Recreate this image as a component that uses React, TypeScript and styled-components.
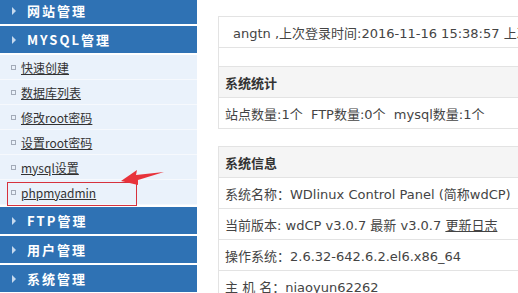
import React from "react";
import styled, { createGlobalStyle } from "styled-components";

const Global = createGlobalStyle`
  html, body { margin: 0; padding: 0; background: #fff; overflow: hidden; }
  body { font-family: "Noto Sans CJK SC", "Microsoft YaHei", sans-serif; }
`;

const Page = styled.div`
  display: flex;
  width: 518px;
  height: 293px;
  overflow: hidden;
`;

const Sidebar = styled.div`
  width: 197px;
  flex: none;
  display: flex;
  flex-direction: column;
  gap: 2px;
  margin-top: -3px;
`;

const Header = styled.div`
  height: 27px;
  background: #2f72b4;
  display: flex;
  align-items: center;
  padding-left: 12px;
  gap: 11px;
  color: #fff;
  font-size: 13px;
  font-weight: bold;
  letter-spacing: 2px;
`;

const Tri = styled.span`
  width: 0;
  height: 0;
  border-top: 4px solid transparent;
  border-bottom: 4px solid transparent;
  border-left: 4px solid #c5d9ee;
`;

const SubList = styled.div`
  background: #eaf2fb;
  display: flex;
  flex-direction: column;
`;

const Item = styled.div`
  position: relative;
  height: 24px;
  border-bottom: 1px solid #f6f9fd;
  display: flex;
  align-items: center;
  padding-left: 11px;
  gap: 5px;
  font-size: 12px;
  color: #333;
`;

const Bullet = styled.span`
  width: 3px;
  height: 3px;
  border: 1px solid #a3abb8;
`;

const Link = styled.a`
  color: #333;
  text-decoration: underline;
`;

const Highlight = styled.div`
  position: absolute;
  left: 7px;
  top: 2px;
  width: 128px;
  height: 22px;
  border: 1px solid #d6323d;
`;

const Arrow = styled.svg`
  position: absolute;
  left: 115px;
  top: -12px;
`;

const Main = styled.div`
  flex: 1;
  padding: 16px 0 0 21px;
  display: flex;
  flex-direction: column;
  gap: 17px;
  overflow: hidden;
`;

const Table = styled.div`
  width: 360px;
  flex: none;
  border: 1px solid #e3e3e3;
  border-bottom: none;
  display: flex;
  flex-direction: column;
`;

const Row = styled.div<{ $head?: boolean; $h?: number; $indent?: number }>`
  height: ${(p) => p.$h ?? 30}px;
  flex: none;
  border-bottom: 1px solid #e3e3e3;
  background: ${(p) => (p.$head ? "#f5f5f5" : "#fff")};
  display: flex;
  align-items: center;
  padding-left: ${(p) => p.$indent ?? 6}px;
  font-family: ${(p) => (p.$head ? `"Noto Sans CJK SC", sans-serif` : `"DejaVu Sans", "Noto Sans CJK SC", sans-serif`)};
  font-size: 13px;
  font-weight: ${(p) => (p.$head ? "bold" : "normal")};
  color: ${(p) => (p.$head ? "#333" : "#444")};
  white-space: pre;
`;

const Under = styled.a`
  color: #444;
  text-decoration: underline;
`;

export default function App() {
  const items = ["快速创建", "数据库列表", "修改root密码", "设置root密码", "mysql设置"];
  return (
    <Page>
      <Global />
      <Sidebar>
        <Header><Tri />网站管理</Header>
        <Header><Tri />MYSQL管理</Header>
        <SubList>
          {items.map((t) => (
            <Item key={t}><Bullet /><Link>{t}</Link></Item>
          ))}
          <Item>
            <Bullet /><Link>phpmyadmin</Link>
            <Highlight />
            <Arrow width="60" height="24" viewBox="0 0 60 24">
              <path d="M6 13 L22 2 L21 7 L49 4 L23 12 L23 17 Z" fill="#e8333b" />
            </Arrow>
          </Item>
        </SubList>
        <Header><Tri />FTP管理</Header>
        <Header><Tri />用户管理</Header>
        <Header><Tri />系统管理</Header>
      </Sidebar>
      <Main>
        <Table>
          <Row $indent={14}>angtn ,上次登录时间:2016-11-16 15:38:57 上次登录IP</Row>
          <Row $h={18} />
          <Row $head>系统统计</Row>
          <Row>站点数量:1个  FTP数量:0个  mysql数量:1个</Row>
        </Table>
        <Table>
          <Row $head>系统信息</Row>
          <Row>系统名称：WDlinux Control Panel (简称wdCP)</Row>
          <Row>当前版本: wdCP v3.0.7 最新 v3.0.7 <Under>更新日志</Under></Row>
          <Row>操作系统：2.6.32-642.6.2.el6.x86_64</Row>
          <Row>主 机 名：niaoyun62262</Row>
        </Table>
      </Main>
    </Page>
  );
}
